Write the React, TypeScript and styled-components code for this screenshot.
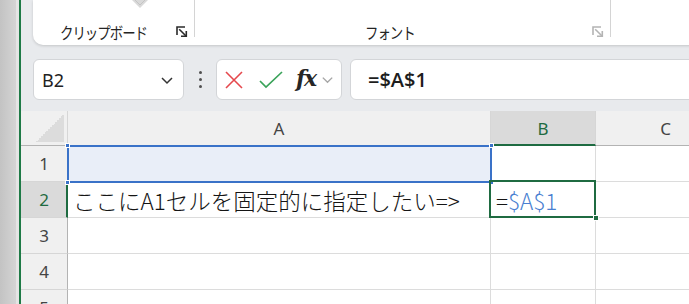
import React from 'react';
import styled, { createGlobalStyle, css } from 'styled-components';

const Global = createGlobalStyle`
  html, body { margin: 0; padding: 0; width: 689px; height: 304px; overflow: hidden; background: #fff; }
  * { box-sizing: border-box; }
  #root { width: 689px; height: 304px; }
`;

const Frame = styled.div`
  display: flex;
  width: 689px;
  height: 304px;
  overflow: hidden;
  font-family: "Noto Sans", "Noto Sans CJK JP", sans-serif;
`;
const SideStrip = styled.div`
  flex: none;
  width: 16px;
  background: linear-gradient(to right, #c3c3c3, #d4d4d4);
`;
const SideGap = styled.div`
  flex: none;
  width: 3px;
  background: #e4e4e4;
`;
const GreenEdge = styled.div`
  flex: none;
  width: 2px;
  background: #1e7a46;
`;
const Main = styled.div`
  flex: 1;
  min-width: 0;
  display: flex;
  flex-direction: column;
  overflow: hidden;
`;

const Top = styled.div`
  flex: none;
  height: 111px;
  background: #e8eaed;
  padding-left: 12px;
  display: flex;
  flex-direction: column;
`;
const RibbonCard = styled.div`
  flex: none;
  width: 800px;
  height: 45px;
  background: #fff;
  border-bottom-left-radius: 10px;
  box-shadow: 0 1px 3px rgba(0, 0, 0, 0.16);
  display: flex;
  position: relative;
`;
const Group = styled.div<{ $w: number; $labelLeft: number }>`
  flex: none;
  width: ${p => p.$w}px;
  height: 100%;
  display: flex;
  align-items: center;
  padding-top: 19px;
  padding-left: ${p => p.$labelLeft}px;
  padding-right: 6px;
  position: relative;
`;
const GroupLabel = styled.span`
  display: inline-block;
  font-family: "Noto Sans CJK JP", sans-serif;
  font-size: 16px;
  letter-spacing: -1.2px;
  color: #242424;
  line-height: 1;
  transform: scaleX(0.84);
  transform-origin: left center;
`;
const Launcher = styled.svg<{ $dim?: boolean }>`
  margin-left: auto;
  width: 12px;
  height: 12px;
  color: ${p => (p.$dim ? '#b4b4b4' : '#2a2a2a')};
`;
const Separator = styled.div`
  flex: none;
  width: 1px;
  height: 37px;
  background: #d4d4d4;
`;
const BrushTip = styled.svg`
  position: absolute;
  left: 97px;
  top: 0;
  width: 20px;
  height: 9px;
`;

const FormulaRow = styled.div`
  margin-top: 14px;
  height: 41px;
  display: flex;
  align-items: stretch;
`;
const Box = styled.div`
  background: #fff;
  border: 1px solid #d3d5d8;
  border-radius: 6px;
  display: flex;
  align-items: center;
`;
const NameBox = styled(Box)`
  flex: none;
  width: 151px;
  padding: 0 8px 0 8px;
  justify-content: space-between;
`;
const NameText = styled.span`
  font-family: "Noto Sans", sans-serif;
  font-size: 18px;
  color: #222;
`;
const Kebab = styled.div`
  flex: none;
  width: 32px;
  display: flex;
  flex-direction: column;
  align-items: center;
  justify-content: center;
  gap: 4px;
  & > i {
    display: block;
    width: 3px;
    height: 3px;
    border-radius: 50%;
    background: #505050;
  }
`;
const FnBox = styled(Box)`
  flex: none;
  width: 126px;
  padding-left: 7px;
  gap: 0;
`;
const FxText = styled.span`
  font-family: "DejaVu Serif", "Liberation Serif", serif;
  font-style: italic;
  font-weight: bold;
  font-size: 22px;
  color: #262626;
  margin-left: 12px;
  letter-spacing: -1.5px;
  line-height: 1;
  margin-top: -3px;
`;
const InputBox = styled(Box)`
  flex: none;
  width: 400px;
  margin-left: 8px;
  padding-left: 17px;
  border-top-right-radius: 0;
  border-bottom-right-radius: 0;
`;
const FormulaText = styled.span`
  font-family: "Open Sans", sans-serif;
  font-weight: 600;
  font-size: 20px;
  color: #1d1d1d;
`;

const Sheet = styled.div`
  flex: none;
  display: grid;
  grid-template-columns: 47px 423px 105px 140px;
  grid-template-rows: 35px repeat(5, 36px);
  background: #fff;
`;
const Corner = styled.div`
  background: #f0f0f0;
  border-right: 1px solid #d6d6d6;
  border-bottom: 1px solid #b3b3b3;
  display: flex;
  align-items: flex-end;
  justify-content: flex-end;
  padding: 0 3px 3px 0;
`;
const Triangle = styled.div`
  width: 28px;
  height: 28px;
  background: linear-gradient(to top left, #dcdcdc 50%, transparent 50%);
`;
const ColHead = styled.div<{ $sel?: boolean }>`
  background: ${p => (p.$sel ? '#dadada' : '#f0f0f0')};
  border-right: 1px solid #d6d6d6;
  border-bottom: ${p => (p.$sel ? '2px solid #1e6b41' : '1px solid #b3b3b3')};
  display: flex;
  align-items: center;
  justify-content: center;
  font-family: "Noto Sans", sans-serif;
  font-size: 17px;
  color: ${p => (p.$sel ? '#1e6b41' : '#444')};
  padding-top: ${p => (p.$sel ? '1px' : '0')};
`;
const RowHead = styled.div<{ $sel?: boolean }>`
  background: ${p => (p.$sel ? '#dadada' : '#f0f0f0')};
  border-right: ${p => (p.$sel ? '2px solid #1e6b41' : '1px solid #b3b3b3')};
  border-bottom: 1px solid #d6d6d6;
  display: flex;
  align-items: center;
  justify-content: center;
  font-family: "Noto Sans", sans-serif;
  font-size: 17px;
  color: ${p => (p.$sel ? '#1e6b41' : '#444')};
  padding-left: ${p => (p.$sel ? '1px' : '0')};
`;
const Cell = styled.div<{ $ref?: boolean; $active?: boolean }>`
  position: relative;
  border-right: 1px solid #dcdcdc;
  border-bottom: 1px solid #dcdcdc;
  display: flex;
  align-items: center;
  padding-left: 5px;
  font-family: "Noto Sans CJK JP", sans-serif;
  font-weight: 300;
  font-size: 22.5px;
  color: #151515;
  white-space: nowrap;
  ${p =>
    p.$ref &&
    css`
      background: #e9eef8;
      z-index: 2;
      &::after {
        content: '';
        position: absolute;
        left: -1px;
        top: -1px;
        right: -2px;
        bottom: -2px;
        border: 2px solid #3a72c8;
        pointer-events: none;
      }
    `}
  ${p =>
    p.$active &&
    css`
      z-index: 3;
      padding-left: 5px;
      &::after {
        content: '';
        position: absolute;
        left: -2px;
        top: -2px;
        right: -1px;
        bottom: -1px;
        border: 2px solid #1f6b41;
        pointer-events: none;
      }
    `}
`;
const Handle = styled.span<{ $x: 'l' | 'r'; $y: 't' | 'b'; $color: string; $size: number }>`
  position: absolute;
  z-index: 4;
  width: ${p => p.$size}px;
  height: ${p => p.$size}px;
  background: ${p => p.$color};
  border: 1px solid #fff;
  ${p => (p.$x === 'l' ? `left: -${p.$size / 2 + 1}px;` : `right: -${p.$size / 2 + 1}px;`)}
  ${p => (p.$y === 't' ? `top: -${p.$size / 2 + 1}px;` : `bottom: -${p.$size / 2 + 1}px;`)}
`;
const RefText = styled.span`
  color: #4a7fd1;
`;

const LauncherIcon = ({ dim }: { dim?: boolean }) => (
  <Launcher $dim={dim} viewBox="0 0 12 12" fill="none" stroke="currentColor" strokeWidth="1.6">
    <path d="M1 9 V1 H9" />
    <path d="M3.2 3.2 L10.3 10.3" />
    <path d="M10.3 5 V10.3 H5" />
  </Launcher>
);

const Chevron = ({ color, size }: { color: string; size: number }) => (
  <svg width={size} height={size} viewBox="0 0 16 16" fill="none" stroke={color} strokeWidth="1.5">
    <path d="M3 6 L8 11 L13 6" />
  </svg>
);

const rows = [1, 2, 3, 4, 5];

export default function App() {
  return (
    <>
      <Global />
      <Frame>
        <SideStrip />
        <SideGap />
        <GreenEdge />
        <Main>
          <Top>
            <RibbonCard>
              <BrushTip viewBox="0 0 20 9">
                <path d="M2 0 L10 8 L18 0 Z" fill="#d9d9d9" />
                <path d="M5 0 L10 5 L15 0" fill="none" stroke="#c4c4c4" strokeWidth="1" />
              </BrushTip>
              <Group $w={161} $labelLeft={27}>
                <GroupLabel>クリップボード</GroupLabel>
                <LauncherIcon />
              </Group>
              <Separator />
              <Group $w={415} $labelLeft={170}>
                <GroupLabel>フォント</GroupLabel>
                <LauncherIcon dim />
              </Group>
              <Separator />
            </RibbonCard>
            <FormulaRow>
              <NameBox>
                <NameText>B2</NameText>
                <Chevron color="#333" size={16} />
              </NameBox>
              <Kebab>
                <i />
                <i />
                <i />
              </Kebab>
              <FnBox>
                <svg width="20" height="20" viewBox="0 0 20 20" fill="none" stroke="#e5484d" strokeWidth="1.6">
                  <path d="M2 2 L18 18 M18 2 L2 18" />
                </svg>
                <svg width="26" height="20" viewBox="0 0 26 20" fill="none" stroke="#3aa35a" strokeWidth="1.7" style={{ marginLeft: 14 }}>
                  <path d="M2 11 L8 17 L24 2" />
                </svg>
                <FxText>fx</FxText>
                <span style={{ marginLeft: 4, display: 'flex' }}>
                  <Chevron color="#a6a6a6" size={15} />
                </span>
              </FnBox>
              <InputBox>
                <FormulaText>=$A$1</FormulaText>
              </InputBox>
            </FormulaRow>
          </Top>
          <Sheet>
            <Corner>
              <Triangle />
            </Corner>
            <ColHead>A</ColHead>
            <ColHead $sel>B</ColHead>
            <ColHead>C</ColHead>
            {rows.map(r => (
              <React.Fragment key={r}>
                <RowHead $sel={r === 2}>{r}</RowHead>
                {r === 1 ? (
                  <Cell $ref>
                    <Handle $x="l" $y="t" $color="#3a72c8" $size={5} />
                    <Handle $x="r" $y="t" $color="#3a72c8" $size={5} />
                    <Handle $x="l" $y="b" $color="#3a72c8" $size={5} />
                    <Handle $x="r" $y="b" $color="#3a72c8" $size={5} />
                  </Cell>
                ) : r === 2 ? (
                  <Cell>ここにA1セルを固定的に指定したい=&gt;</Cell>
                ) : (
                  <Cell />
                )}
                {r === 2 ? (
                  <Cell $active>
                    =<RefText>$A$1</RefText>
                    <Handle $x="r" $y="b" $color="#1f6b41" $size={6} />
                  </Cell>
                ) : (
                  <Cell />
                )}
                <Cell />
              </React.Fragment>
            ))}
          </Sheet>
        </Main>
      </Frame>
    </>
  );
}
